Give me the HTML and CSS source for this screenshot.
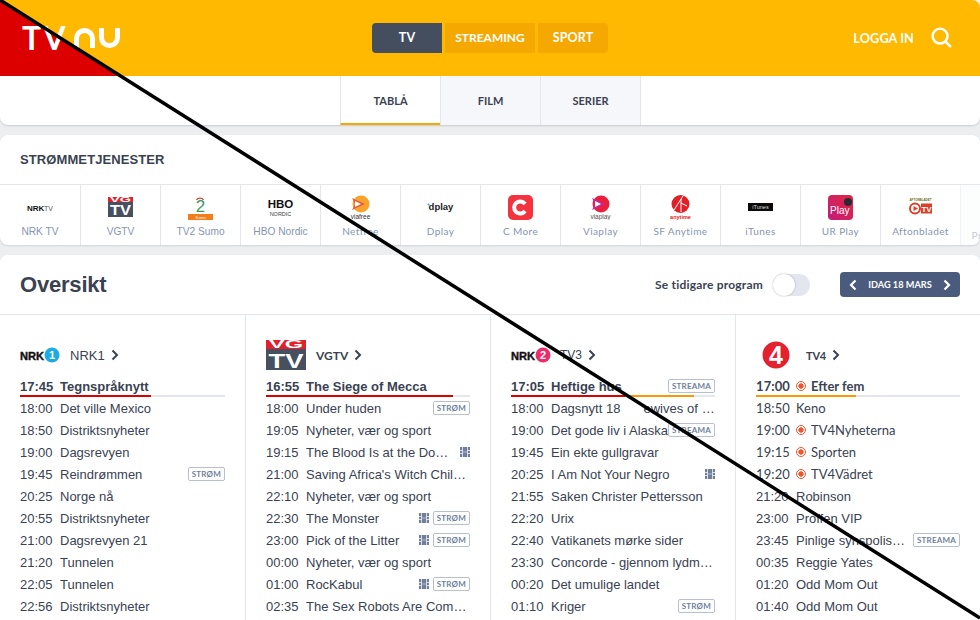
FILE: index.html
```html
<!DOCTYPE html>
<html lang="en">
<head>
    <meta charset="UTF-8">
    <title>TV.nu</title>
    <link rel="stylesheet" href="styles.css">
</head>
<body>
    <div class="page">
        <!-- Top card with yellow header and sub tabs -->
        <section class="top-card">
            <header class="site-header">
                <div class="red-corner"></div>
                <div class="logo" aria-label="TVNU">
                    <span class="logo-tv">TV</span>
                    <span class="logo-n"></span>
                    <span class="logo-u"></span>
                </div>
                <nav class="main-nav">
                    <a class="main-link active">TV</a>
                    <a class="main-link wide">STREAMING</a>
                    <a class="main-link">SPORT</a>
                </nav>
                <div class="header-right">
                    <a class="login">LOGGA IN</a>
                    <svg class="search" width="21" height="21" viewBox="0 0 22 22" fill="none" stroke="#fff" stroke-width="2.6" stroke-linecap="round">
                        <circle cx="9.5" cy="9.5" r="7.8"/>
                        <path d="M15.2 15.2l5 5"/>
                    </svg>
                </div>
            </header>
            <nav class="sub-nav">
                <a class="sub-link active">TABLÅ</a>
                <a class="sub-link">FILM</a>
                <a class="sub-link last">SERIER</a>
            </nav>
        </section>

        <!-- Streaming services -->
        <section class="services-card">
            <h2 class="services-title">STRØMMETJENESTER</h2>
            <div class="services">
                <div class="service">
                    <svg class="service-logo" width="30" height="25" viewBox="0 0 30 25">
                        <text x="2" y="16" class="svg-heavy" font-size="8" fill="#111">NRK</text>
                        <text x="19" y="16" class="svg-sans" font-size="7" fill="#555">TV</text>
                    </svg>
                    <span class="service-name plain">NRK TV</span>
                </div>
                <div class="service">
                    <svg class="service-logo" width="25" height="25" viewBox="0 0 25 25">
                        <rect y="2" width="25" height="6" fill="#e2202c"/>
                        <text x="12.5" y="7.4" text-anchor="middle" class="svg-heavy" font-size="6.5" fill="#fff" textLength="21" lengthAdjust="spacingAndGlyphs">VG</text>
                        <rect y="7" width="25" height="15" fill="#47505f"/>
                        <text x="12.5" y="20" text-anchor="middle" class="svg-heavy" font-size="14" fill="#fff" textLength="21" lengthAdjust="spacingAndGlyphs">TV</text>
                    </svg>
                    <span class="service-name plain">VGTV</span>
                </div>
                <div class="service">
                    <svg class="service-logo" width="25" height="25" viewBox="0 0 25 25">
                        <text x="12.5" y="17" text-anchor="middle" class="svg-sans" font-size="17" fill="#3c9a5f">2</text>
                        <path d="M8.5 5c1-2.500 6-2.500 7 0" fill="none" stroke="#e2402c" stroke-width="1.300"/>
                        <rect y="19" width="25" height="6" fill="#f47d1a"/>
                        <text x="12.5" y="23.500" text-anchor="middle" class="svg-sans" font-size="4" fill="#fff">Sumo</text>
                    </svg>
                    <span class="service-name plain">TV2 Sumo</span>
                </div>
                <div class="service">
                    <svg class="service-logo" width="27" height="25" viewBox="0 0 27 25">
                        <text x="13.500" y="13" text-anchor="middle" class="svg-heavy" font-size="11.500" fill="#111">HBO</text>
                        <text x="13.500" y="20.500" text-anchor="middle" class="svg-sans" font-size="5.500" fill="#444">NORDIC</text>
                    </svg>
                    <span class="service-name plain">HBO Nordic</span>
                </div>
                <div class="service">
                    <svg class="service-logo" width="25" height="25" viewBox="0 0 25 25">
                        <circle cx="13" cy="9" r="8.500" fill="#f9a32c"/>
                        <path d="M4 3l13 6-13 6 3-6z" fill="#ea5a3a"/>
                        <path d="M7 6l6 3-6 3z" fill="#fff"/>
                        <text x="12.500" y="23.500" text-anchor="middle" class="svg-sans" font-size="6.500" fill="#333">viafree</text>
                    </svg>
                    <span class="service-name">Netfree</span>
                </div>
                <div class="service">
                    <svg class="service-logo" width="27" height="25" viewBox="0 0 27 25">
                        <circle cx="1.500" cy="9.500" r="1" fill="#2aa9e0"/>
                        <text x="14" y="15" text-anchor="middle" class="svg-heavy" font-size="9.500" fill="#222">dplay</text>
                    </svg>
                    <span class="service-name">Dplay</span>
                </div>
                <div class="service">
                    <svg class="service-logo" width="25" height="25" viewBox="0 0 25 25">
                        <rect width="25" height="25" rx="5" fill="#f4333f"/>
                        <path d="M17 9a6 6 0 1 0 0 7" fill="none" stroke="#fff" stroke-width="4"/>
                    </svg>
                    <span class="service-name">C More</span>
                </div>
                <div class="service">
                    <svg class="service-logo" width="25" height="25" viewBox="0 0 25 25">
                        <circle cx="13" cy="9" r="8.500" fill="#e8203e"/>
                        <path d="M4 3l13 6-13 6 3-6z" fill="#c62a9a"/>
                        <path d="M7 6l6 3-6 3z" fill="#fff"/>
                        <text x="12.500" y="23.500" text-anchor="middle" class="svg-sans" font-size="6.500" fill="#555">viaplay</text>
                    </svg>
                    <span class="service-name">Viaplay</span>
                </div>
                <div class="service">
                    <svg class="service-logo" width="25" height="25" viewBox="0 0 25 25">
                        <circle cx="12.500" cy="9" r="9" fill="#e01f26"/>
                        <path d="M6 15L15 1M13 4v13M13 8l6 3" fill="none" stroke="#fff" stroke-width="1"/>
                        <text x="12.500" y="24" text-anchor="middle" class="svg-heavy" font-size="5.500" fill="#d22">anytime</text>
                    </svg>
                    <span class="service-name">SF Anytime</span>
                </div>
                <div class="service">
                    <svg class="service-logo" width="25" height="25" viewBox="0 0 25 25">
                        <rect y="8" width="25" height="8" fill="#0a0a0a"/>
                        <text x="12.500" y="14" text-anchor="middle" class="svg-sans" font-size="5.500" fill="#ddd">iTunes</text>
                    </svg>
                    <span class="service-name">iTunes</span>
                </div>
                <div class="service">
                    <svg class="service-logo" width="25" height="25" viewBox="0 0 25 25">
                        <defs>
                            <linearGradient id="urplay" x1="0" y1="1" x2="1" y2="0">
                                <stop offset="0" stop-color="#c31c7c"/>
                                <stop offset="1" stop-color="#e0283f"/>
                            </linearGradient>
                        </defs>
                        <rect width="25" height="25" rx="4" fill="url(#urplay)"/>
                        <text x="2" y="19" class="svg-sans" font-size="10" fill="#fff">Play</text>
                        <circle cx="20" cy="7" r="4" fill="#2a2a33"/>
                    </svg>
                    <span class="service-name">UR Play</span>
                </div>
                <div class="service">
                    <svg class="service-logo" width="25" height="25" viewBox="0 0 25 25">
                        <text x="12.500" y="6" text-anchor="middle" class="svg-heavy" font-size="4" fill="#6a6a20" textLength="22" lengthAdjust="spacingAndGlyphs">AFTONBLADET</text>
                        <circle cx="7" cy="13.500" r="5" fill="none" stroke="#d9402a" stroke-width="2"/>
                        <path d="M5.500 11l4.500 2.500-4.500 2.500z" fill="#d9402a"/>
                        <rect x="13" y="8.500" width="11" height="10" fill="#d9402a"/>
                        <text x="18.500" y="17" text-anchor="middle" class="svg-heavy" font-size="8" fill="#fff">TV</text>
                    </svg>
                    <span class="service-name">Aftonbladet</span>
                </div>
                <div class="service faded">
                    <span class="service-name">Prime Video</span>
                </div>
            </div>
        </section>

        <!-- Overview with channel columns -->
        <section class="overview-card">
            <div class="overview-head">
                <h1 class="overview-title">Oversikt</h1>
                <div class="overview-tools">
                    <span class="toggle-label">Se tidigare program</span>
                    <span class="toggle"><span class="toggle-knob"></span></span>
                    <div class="date-btn">
                        <svg width="8" height="12" viewBox="0 0 8 12" fill="none" stroke="#fff" stroke-width="2.2"><path d="M6.500 1.500L2 6l4.500 4.500"/></svg>
                        <span>IDAG 18 MARS</span>
                        <svg width="8" height="12" viewBox="0 0 8 12" fill="none" stroke="#fff" stroke-width="2.2"><path d="M1.500 1.500L6 6l-4.500 4.500"/></svg>
                    </div>
                </div>
            </div>

            <div class="channels">
                <!-- NRK1 -->
                <div class="channel">
                    <div class="channel-head">
                        <svg class="channel-logo" width="40" height="16" viewBox="0 0 40 16">
                            <text x="0" y="12.500" class="svg-heavy" font-size="11" fill="#111" stroke="#111" stroke-width="0.4" textLength="24" lengthAdjust="spacingAndGlyphs">NRK</text>
                            <circle cx="32" cy="8" r="7.500" fill="#1cabe2"/>
                            <text x="32" y="12" text-anchor="middle" class="svg-heavy" font-size="11" fill="#fff">1</text>
                        </svg>
                        <span class="channel-name">NRK1</span>
                        <svg class="chev" width="8" height="12" viewBox="0 0 8 12" fill="none" stroke="#3a4252" stroke-width="2"><path d="M1.500 1.500L6 6l-4.500 4.500"/></svg>
                    </div>
                    <div class="row now"><span class="time">17:45</span><span class="title">Tegnspråknytt</span><div class="track"><div class="fill red" style="width:131px"></div></div></div>
                    <div class="row"><span class="time">18:00</span><span class="title">Det ville Mexico</span></div>
                    <div class="row"><span class="time">18:50</span><span class="title">Distriktsnyheter</span></div>
                    <div class="row"><span class="time">19:00</span><span class="title">Dagsrevyen</span></div>
                    <div class="row"><span class="time">19:45</span><span class="title">Reindrømmen</span><span class="badge">STRØM</span></div>
                    <div class="row"><span class="time">20:25</span><span class="title">Norge nå</span></div>
                    <div class="row"><span class="time">20:55</span><span class="title">Distriktsnyheter</span></div>
                    <div class="row"><span class="time">21:00</span><span class="title">Dagsrevyen 21</span></div>
                    <div class="row"><span class="time">21:20</span><span class="title">Tunnelen</span></div>
                    <div class="row"><span class="time">22:05</span><span class="title">Tunnelen</span></div>
                    <div class="row"><span class="time">22:56</span><span class="title">Distriktsnyheter</span></div>
                </div>

                <!-- VGTV -->
                <div class="channel">
                    <div class="channel-head">
                        <svg class="channel-logo" width="40" height="30" viewBox="0 0 40 30">
                            <rect width="40" height="9" fill="#e2202c"/>
                            <text x="20" y="8" text-anchor="middle" class="svg-heavy" font-size="10" fill="#fff" textLength="34" lengthAdjust="spacingAndGlyphs">VG</text>
                            <rect y="9" width="40" height="21" fill="#47505f"/>
                            <text x="20" y="27.500" text-anchor="middle" class="svg-heavy" font-size="21" fill="#fff" textLength="35" lengthAdjust="spacingAndGlyphs">TV</text>
                        </svg>
                        <span class="channel-name vg">VGTV</span>
                        <svg class="chev" width="8" height="12" viewBox="0 0 8 12" fill="none" stroke="#3a4252" stroke-width="2"><path d="M1.500 1.500L6 6l-4.500 4.500"/></svg>
                    </div>
                    <div class="row now"><span class="time">16:55</span><span class="title">The Siege of Mecca</span><div class="track"><div class="fill red" style="width:187px"></div></div></div>
                    <div class="row"><span class="time">18:00</span><span class="title">Under huden</span><span class="badge">STRØM</span></div>
                    <div class="row"><span class="time">19:05</span><span class="title">Nyheter, vær og sport</span></div>
                    <div class="row"><span class="time">19:15</span><span class="title">The Blood Is at the Doorstep</span><svg class="film" width="10" height="10" viewBox="0 0 10 10"><use href="#film"/></svg></div>
                    <div class="row"><span class="time">21:00</span><span class="title">Saving Africa's Witch Children</span></div>
                    <div class="row"><span class="time">22:10</span><span class="title">Nyheter, vær og sport</span></div>
                    <div class="row"><span class="time">22:30</span><span class="title">The Monster</span><svg class="film" width="10" height="10" viewBox="0 0 10 10"><use href="#film"/></svg><span class="badge">STRØM</span></div>
                    <div class="row"><span class="time">23:00</span><span class="title">Pick of the Litter</span><svg class="film" width="10" height="10" viewBox="0 0 10 10"><use href="#film"/></svg><span class="badge">STRØM</span></div>
                    <div class="row"><span class="time">00:00</span><span class="title">Nyheter, vær og sport</span></div>
                    <div class="row"><span class="time">01:00</span><span class="title">RocKabul</span><svg class="film" width="10" height="10" viewBox="0 0 10 10"><use href="#film"/></svg><span class="badge">STRØM</span></div>
                    <div class="row"><span class="time">02:35</span><span class="title">The Sex Robots Are Coming</span></div>
                </div>

                <!-- TV3 -->
                <div class="channel">
                    <div class="channel-head">
                        <svg class="channel-logo" width="40" height="16" viewBox="0 0 40 16">
                            <text x="0" y="12.500" class="svg-heavy" font-size="11" fill="#111" stroke="#111" stroke-width="0.4" textLength="24" lengthAdjust="spacingAndGlyphs">NRK</text>
                            <circle cx="32" cy="8" r="7.500" fill="#ef2b6a"/>
                            <text x="32" y="12" text-anchor="middle" class="svg-heavy" font-size="11" fill="#fff">2</text>
                        </svg>
                        <span class="channel-name tight">TV3</span>
                        <svg class="chev" width="8" height="12" viewBox="0 0 8 12" fill="none" stroke="#3a4252" stroke-width="2"><path d="M1.500 1.500L6 6l-4.500 4.500"/></svg>
                    </div>
                    <div class="row now"><span class="time">17:05</span><span class="title">Heftige hus</span><span class="badge">STREAMA</span><div class="track"><div class="fill amber" style="width:183px"></div><div class="fill red" style="width:114px"></div></div></div>
                    <div class="row"><span class="time">18:00</span><span class="title full">Dagsnytt 18 &nbsp; &nbsp; &nbsp;ewives of O...</span></div>
                    <div class="row"><span class="time">19:00</span><span class="title over">Det gode liv i Alaska</span><span class="badge">STREAMA</span></div>
                    <div class="row"><span class="time">19:45</span><span class="title">Ein ekte gullgravar</span></div>
                    <div class="row"><span class="time">20:25</span><span class="title">I Am Not Your Negro</span><svg class="film" width="10" height="10" viewBox="0 0 10 10"><use href="#film"/></svg></div>
                    <div class="row"><span class="time">21:55</span><span class="title">Saken Christer Pettersson</span></div>
                    <div class="row"><span class="time">22:20</span><span class="title">Urix</span></div>
                    <div class="row"><span class="time">22:40</span><span class="title">Vatikanets mørke sider</span></div>
                    <div class="row"><span class="time">23:30</span><span class="title">Concorde - gjennom lydmuren</span></div>
                    <div class="row"><span class="time">00:20</span><span class="title">Det umulige landet</span></div>
                    <div class="row"><span class="time">01:10</span><span class="title">Kriger</span><span class="badge">STRØM</span></div>
                </div>

                <!-- TV4 -->
                <div class="channel">
                    <div class="channel-head">
                        <svg class="channel-logo tv4-logo" width="28" height="28" viewBox="0 0 28 28">
                            <circle cx="14" cy="14" r="13.500" fill="#e4212f"/>
                            <text x="14" y="23" text-anchor="middle" class="svg-heavy" font-size="25" fill="#fff">4</text>
                        </svg>
                        <span class="channel-name alt">TV4</span>
                        <svg class="chev" width="8" height="12" viewBox="0 0 8 12" fill="none" stroke="#3a4252" stroke-width="2"><path d="M1.500 1.500L6 6l-4.500 4.500"/></svg>
                    </div>
                    <div class="row now alt"><span class="time">17:00</span><span class="live"></span><span class="title">Efter fem</span><div class="track"><div class="fill amber" style="width:100px"></div></div></div>
                    <div class="row alt"><span class="time">18:50</span><span class="title">Keno</span></div>
                    <div class="row alt"><span class="time">19:00</span><span class="live"></span><span class="title">TV4Nyheterna</span></div>
                    <div class="row alt"><span class="time">19:15</span><span class="live"></span><span class="title">Sporten</span></div>
                    <div class="row alt"><span class="time">19:20</span><span class="live"></span><span class="title">TV4Vädret</span></div>
                    <div class="row"><span class="time">21:20</span><span class="title">Robinson</span></div>
                    <div class="row"><span class="time">23:00</span><span class="title">Proffen VIP</span></div>
                    <div class="row"><span class="time">23:45</span><span class="title">Pinlige synspolisene</span><span class="badge">STREAMA</span></div>
                    <div class="row"><span class="time">00:35</span><span class="title">Reggie Yates</span></div>
                    <div class="row"><span class="time">01:20</span><span class="title">Odd Mom Out</span></div>
                    <div class="row"><span class="time">01:40</span><span class="title">Odd Mom Out</span></div>
                </div>
            </div>
        </section>
    </div>

    <!-- Shared film strip icon -->
    <svg class="defs" width="0" height="0">
        <symbol id="film" viewBox="0 0 10 10">
            <path fill="#6f7f9c" fill-rule="evenodd" d="M0 0h10v10H0zM2.200 0v10h.7V0zM7.100 0v10h.7V0zM0 3v.7h2.200V3zM0 6.300V7h2.200v-.7zM7.800 3v.7H10V3zM7.800 6.300V7H10v-.7zM2.900 4.700v.6h4.200v-.6z"/>
        </symbol>
    </svg>

    <!-- Diagonal stroke across the whole picture -->
    <svg class="slash" width="980" height="620" viewBox="0 0 980 620">
        <line x1="0" y1="0" x2="980" y2="618" stroke="#000" stroke-width="3.5"/>
    </svg>
</body>
</html>
```

FILE: styles.css
```css
html, body {
    margin: 0;
    padding: 0;
    height: 100%;
    overflow: hidden;
    background: #eceef0;
    font-family: "Liberation Sans", Arial, sans-serif;
    color: #3a4252;
}

.page {
    position: relative;
    width: 980px;
    height: 620px;
    overflow: hidden;
}

/* SVG logo text */
.svg-heavy {
    font-family: "Liberation Sans", sans-serif;
    font-weight: 700;
}

.svg-sans {
    font-family: "Liberation Sans", sans-serif;
}

.defs {
    position: absolute;
}

/* Top card */
.top-card {
    background: #fff;
    border-radius: 0 8px 8px 8px;
    box-shadow: 0 1px 2px rgba(0, 0, 0, 0.15);
    overflow: hidden;
}

.site-header {
    position: relative;
    display: flex;
    align-items: center;
    justify-content: center;
    height: 76px;
    background: #ffb900;
}

.red-corner {
    position: absolute;
    left: 0;
    top: 0;
    width: 120px;
    height: 76px;
    background: #dd0000;
    clip-path: polygon(0 0, 100% 100%, 0 100%);
}

/* TVNU logo, n and u are plain CSS shapes */
.logo {
    position: absolute;
    left: 22px;
    top: 25px;
    display: flex;
    align-items: flex-start;
    height: 26px;
}

.logo-tv {
    font-family: "Lato", sans-serif;
    font-weight: 700;
    font-size: 32px;
    line-height: 26px;
    color: #fff;
    width: 52px;
    letter-spacing: 2px;
}

.logo-n, .logo-u {
    display: block;
    box-sizing: border-box;
    width: 21px;
    height: 20px;
    margin-top: 3px;
    border: 5px solid #fff;
}

.logo-n {
    border-bottom: 0;
    border-radius: 11px 11px 0 0;
    margin-right: 4px;
}

.logo-u {
    border-top: 0;
    border-radius: 0 0 11px 11px;
}

.main-nav {
    display: flex;
    gap: 3px;
}

.main-link {
    width: 70px;
    height: 30px;
    line-height: 29px;
    text-align: center;
    background: #f5a800;
    color: #fff;
    font-family: "Lato", sans-serif;
    font-weight: 700;
    font-size: 12.5px;
    letter-spacing: 0.1px;
}

.main-link.wide {
    width: 90px;
    font-size: 12px;
    letter-spacing: 0;
}

.main-link.active {
    background: #454e5f;
    border-radius: 4px 0 0 4px;
}

.main-link:last-child {
    border-radius: 0 4px 4px 0;
}

.header-right {
    position: absolute;
    right: 28px;
    top: 27px;
    display: flex;
    align-items: center;
    gap: 17px;
}

.login {
    color: #fff;
    font-family: "Lato", sans-serif;
    font-weight: 700;
    font-size: 12.7px;
    letter-spacing: 0.1px;
}

.sub-nav {
    display: flex;
    padding-left: 340px;
    height: 49px;
}

.sub-link {
    box-sizing: border-box;
    width: 100px;
    height: 49px;
    line-height: 50px;
    text-align: center;
    background: #f6f7fa;
    border-left: 1px solid #e3e6ee;
    font-family: "Lato", sans-serif;
    font-weight: 700;
    font-size: 11px;
}

.sub-link.last {
    width: 101px;
    border-right: 1px solid #e3e6ee;
}

.sub-link.active {
    background: #fff;
    border-bottom: 2px solid #f5a800;
}

/* Streaming services */
.services-card {
    margin-top: 10px;
    background: #fff;
    border-radius: 8px;
    box-shadow: 0 1px 2px rgba(0, 0, 0, 0.12);
    overflow: hidden;
    height: 110px;
}

.services-title {
    margin: 0;
    padding: 17px 20px 0;
    height: 32px;
    font-size: 13px;
    line-height: 15px;
    font-weight: 700;
    letter-spacing: 0.1px;
}

.services {
    display: flex;
    height: 61px;
    border-top: 1px solid #e3e6ee;
}

.service {
    flex: 0 0 80px;
    box-sizing: border-box;
    display: flex;
    flex-direction: column;
    align-items: center;
    border-left: 1px solid #e3e6ee;
    padding-top: 10px;
}

.service:first-child {
    border-left: 0;
}

.service-logo {
    display: block;
    height: 25px;
    flex: 0 0 25px;
}

.service-name {
    margin-top: 4px;
    font-family: "Lato", sans-serif;
    font-size: 10px;
    line-height: 14px;
    letter-spacing: 0.4px;
    color: #8795b0;
    white-space: nowrap;
}

.service-name.plain {
    margin-top: 5px;
    font-family: "Liberation Sans", sans-serif;
    font-size: 10.2px;
    letter-spacing: 0;
}

.service.faded {
    background: #fafbfc;
    padding-top: 39px;
    opacity: 0.5;
}

/* Overview */
.overview-card {
    margin-top: 10px;
    background: #fff;
    border-radius: 8px 8px 0 0;
    height: 400px;
}

.overview-head {
    display: flex;
    align-items: center;
    justify-content: space-between;
    box-sizing: border-box;
    height: 60px;
    padding: 0 20px;
    border-bottom: 1px solid #e3e6ee;
}

.overview-title {
    margin: 0;
    font-family: "Liberation Sans", sans-serif;
    font-size: 22px;
    font-weight: 700;
    letter-spacing: -0.2px;
}

.overview-tools {
    display: flex;
    align-items: center;
}

.toggle-label {
    font-family: "Lato", sans-serif;
    font-weight: 700;
    font-size: 12px;
    letter-spacing: 0.2px;
}

.toggle {
    display: block;
    width: 37px;
    height: 22px;
    margin: 0 30px 0 10px;
    border-radius: 11px;
    background: #e3e6ee;
}

.toggle-knob {
    display: block;
    width: 22px;
    height: 22px;
    border-radius: 50%;
    background: #fff;
    box-shadow: 0 0 2px rgba(0, 0, 0, 0.3);
}

.date-btn {
    display: flex;
    align-items: center;
    justify-content: space-between;
    box-sizing: border-box;
    width: 120px;
    height: 25px;
    padding: 0 9px;
    border-radius: 4px;
    background: #4a5b7e;
    color: #fff;
    font-family: "Lato", sans-serif;
    font-weight: 700;
    font-size: 9.2px;
}

/* Channel columns */
.channels {
    display: grid;
    grid-template-columns: repeat(4, 245px);
    height: 340px;
}

.channel {
    box-sizing: border-box;
    padding: 25px 20px 0;
    border-left: 1px solid #e3e6ee;
    overflow: hidden;
}

.channel:first-child {
    border-left: 0;
}

.channel-head {
    display: flex;
    align-items: center;
    height: 30px;
    margin-bottom: 5px;
    font-size: 13px;
}

.channel-logo {
    flex: 0 0 auto;
    margin-right: 10px;
}

.tv4-logo {
    margin: 0 16px 0 6px;
}

.channel-name {
    margin-right: 6px;
}

.channel-name.vg {
    font-family: "Lato", sans-serif;
    font-weight: 700;
    font-size: 12px;
}

.channel-name.tight {
    margin-left: -1px;
    font-size: 12px;
}

.channel-name.alt {
    font-family: "Lato", sans-serif;
    font-weight: 700;
    font-size: 11px;
    letter-spacing: -0.2px;
}

.row {
    position: relative;
    display: flex;
    align-items: center;
    height: 22px;
    font-size: 13px;
}

.time {
    flex: 0 0 40px;
}

.title {
    flex: 1 1 auto;
    min-width: 0;
    padding-right: 2px;
    white-space: nowrap;
    overflow: hidden;
    text-overflow: ellipsis;
}

.title.full {
    padding-right: 0;
    word-spacing: 0.2px;
}

/* This title is not cut, it runs over the start of its badge */
.title.over {
    flex: 0 0 auto;
    overflow: visible;
    padding-right: 0;
    margin-right: -7px;
}

.row.now {
    font-weight: 700;
}

.row.alt {
    font-family: "Lato", sans-serif;
}

.row.alt .time {
    letter-spacing: 0.1px;
}

.track {
    position: absolute;
    left: 0;
    right: 0;
    bottom: 0;
    height: 2px;
    background: #e3e6ee;
}

.fill {
    position: absolute;
    left: 0;
    top: 0;
    height: 2px;
}

.fill.red {
    background: #dd0000;
}

.fill.amber {
    background: #ff9800;
}

.badge {
    flex: 0 0 auto;
    box-sizing: border-box;
    height: 14px;
    line-height: 12px;
    padding: 0 3px;
    margin-left: auto;
    border: 1px solid #b8c0d0;
    border-radius: 2px;
    font-family: "Lato", sans-serif;
    font-weight: 700;
    font-size: 8px;
    letter-spacing: 0.2px;
    color: #6f7f9c;
}

.film {
    flex: 0 0 10px;
    margin-left: 6px;
}

.film + .badge {
    margin-left: 4px;
}

/* Live marker in the TV4 column */
.live {
    flex: 0 0 10px;
    box-sizing: border-box;
    width: 10px;
    height: 10px;
    margin-right: 5px;
    border: 1px solid #f4532c;
    border-radius: 50%;
    background: radial-gradient(circle, #f4532c 0 2.4px, #fff 2.9px);
}

.slash {
    position: absolute;
    left: 0;
    top: 0;
    pointer-events: none;
}
```
